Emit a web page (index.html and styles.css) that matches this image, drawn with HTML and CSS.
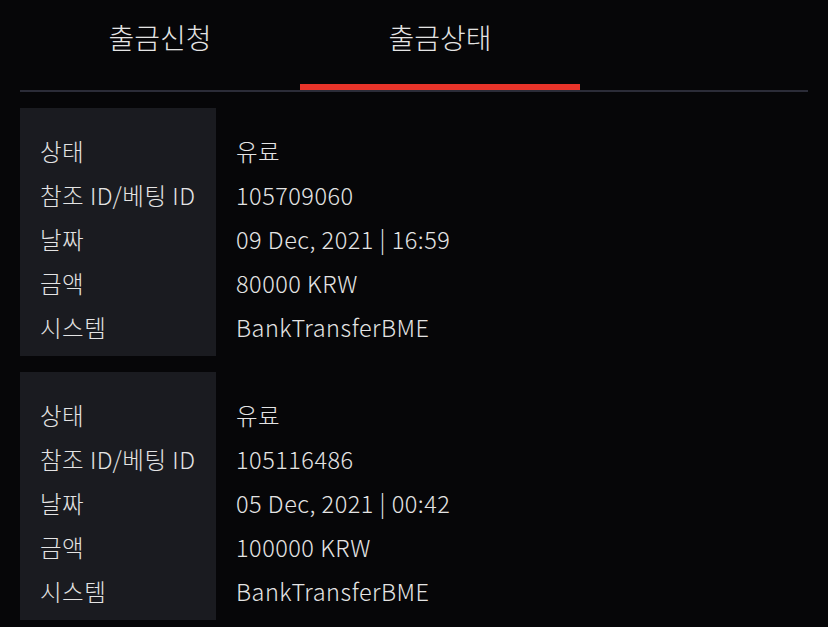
FILE: index.html
```html
<!DOCTYPE html>
<html>
  <head>
    <title>출금상태</title>
    <link rel="stylesheet" href="styles.css">
  </head>
  <body>
    <div class="tabs">
      <div class="tab">출금신청</div>
      <div class="tab active">출금상태</div>
    </div>

    <div class="record">
      <div class="record-keys">
        <div class="row">상태</div>
        <div class="row">참조 ID/베팅 ID</div>
        <div class="row">날짜</div>
        <div class="row">금액</div>
        <div class="row">시스템</div>
      </div>
      <div class="record-vals">
        <div class="row">유료</div>
        <div class="row">105709060</div>
        <div class="row">09 Dec, 2021 | 16:59</div>
        <div class="row">80000 KRW</div>
        <div class="row">BankTransferBME</div>
      </div>
    </div>

    <div class="record">
      <div class="record-keys">
        <div class="row">상태</div>
        <div class="row">참조 ID/베팅 ID</div>
        <div class="row">날짜</div>
        <div class="row">금액</div>
        <div class="row">시스템</div>
      </div>
      <div class="record-vals">
        <div class="row">유료</div>
        <div class="row">105116486</div>
        <div class="row">05 Dec, 2021 | 00:42</div>
        <div class="row">100000 KRW</div>
        <div class="row">BankTransferBME</div>
      </div>
    </div>
  </body>
</html>
```

FILE: styles.css
```css
body {
  margin: 0;
  background-color: #060608;
  color: #e4e4e4;
  font-family: "Noto Sans CJK KR", "Noto Sans", sans-serif;
  font-weight: 300;
}
.tabs {
  display: flex;
  margin: 0 20px;
  border-bottom: 2px solid #2b2c38;
}
.tab {
  width: 280px;
  height: 84px;
  line-height: 74px;
  text-align: center;
  font-size: 28px;
  border-bottom: 6px solid transparent;
}
.tab.active {
  border-bottom-color: #e8342a;
}
.record {
  display: flex;
  margin: 16px 20px 0;
}
.record-keys,
.record-vals {
  padding: 21px 20px 7px;
}
.record-keys {
  width: 156px;
  background-color: #1a1b20;
}
.row {
  height: 44px;
  line-height: 44px;
  font-size: 23.5px;
  letter-spacing: 0.5px;
  white-space: nowrap;
}
```
